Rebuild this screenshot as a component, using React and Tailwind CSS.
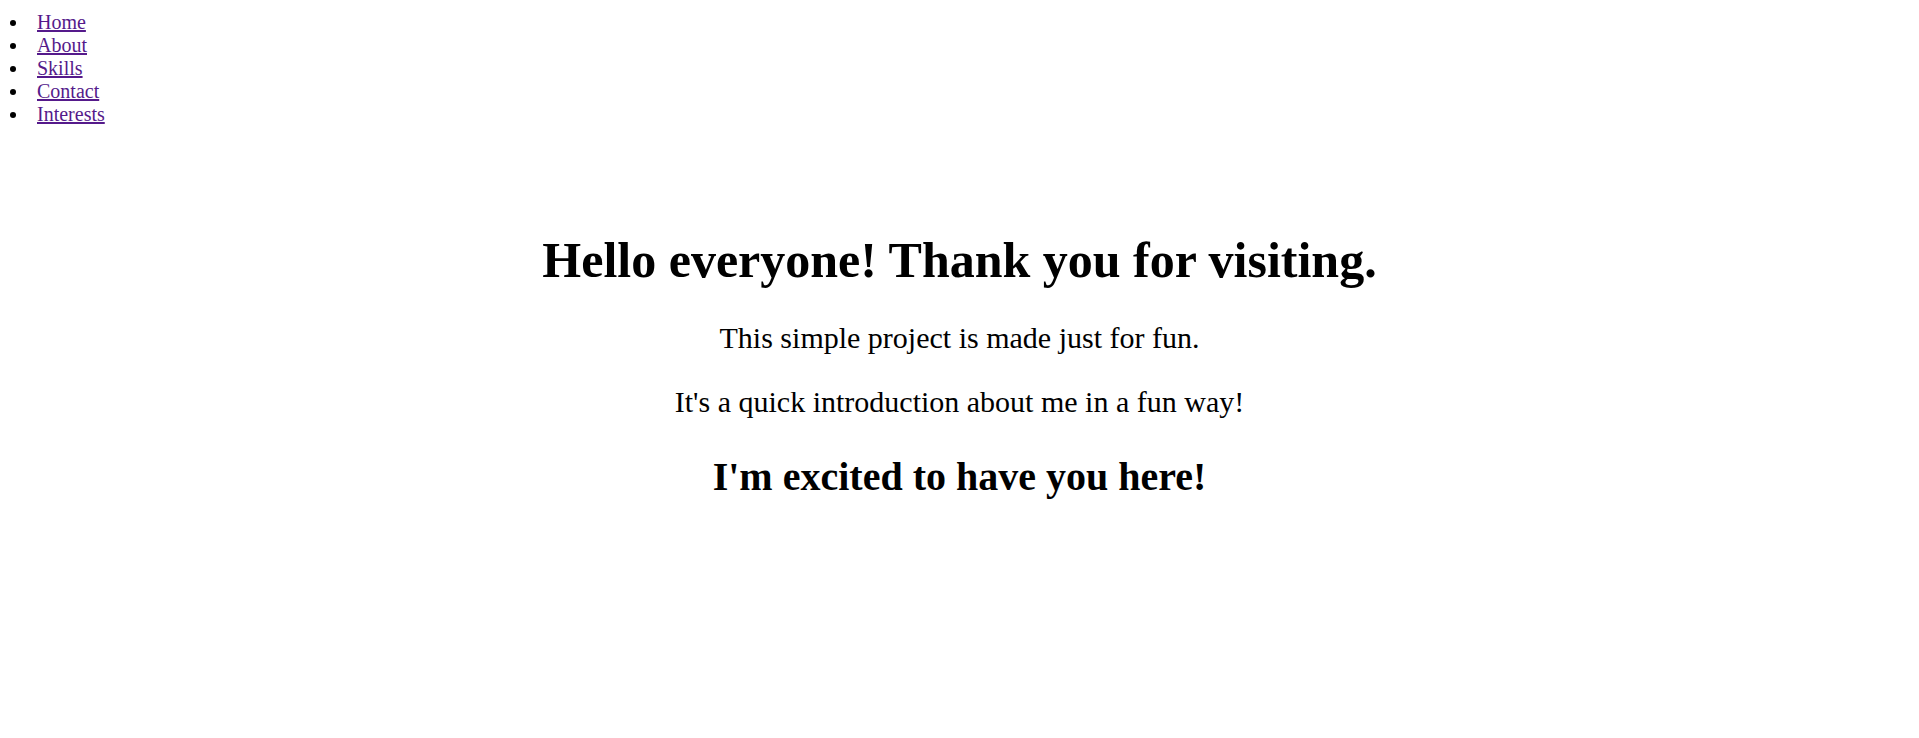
export default function App() {
  const links = ["Home", "About", "Skills", "Contact", "Interests"];
  return (
    <div className="min-h-[738px] bg-white text-black" style={{ fontFamily: '"Liberation Serif", "Times New Roman", serif' }}>
      <nav>
        <ul className="pt-[11px] text-[20px] leading-[23px]">
          {links.map((l) => (
            <li key={l} className="flex items-start">
              <span className="ml-[10px] mt-[9px] w-[6px] h-[6px] rounded-full bg-black shrink-0" />
              <a href="#" className="ml-[21px] text-[#551a8b] underline">{l}</a>
            </li>
          ))}
        </ul>
      </nav>
      <main className="text-center mt-[104px]">
        <h1 className="text-[50px] font-bold leading-[60px]">Hello everyone! Thank you for visiting.</h1>
        <p className="text-[30px] leading-[36px] mt-[30px]">This simple project is made just for fun.</p>
        <p className="text-[30px] leading-[36px] mt-[28px]">It's a quick introduction about me in a fun way!</p>
        <h2 className="text-[40px] font-bold leading-[48px] mt-[33px]">I'm excited to have you here!</h2>
      </main>
    </div>
  );
}
